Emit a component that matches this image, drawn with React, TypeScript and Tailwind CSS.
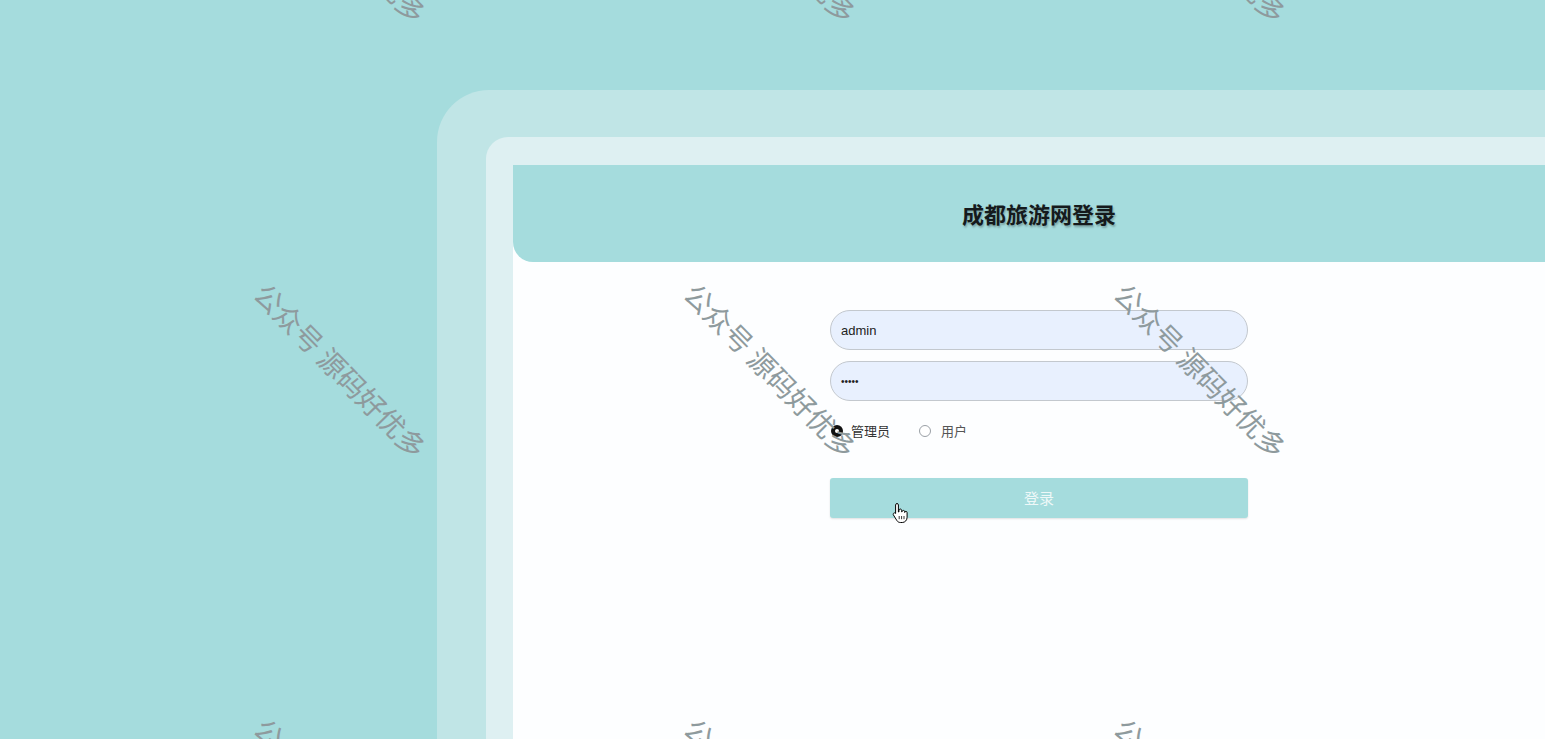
import React from "react";

const wmFont = { fontFamily: '"Noto Sans CJK SC", "Noto Sans", sans-serif' };

function Watermarks() {
  const xs = [341, 771, 1201];
  const ys = [-65, 370, 805];
  const items: { x: number; y: number }[] = [];
  ys.forEach((y) => xs.forEach((x) => items.push({ x, y })));
  return (
    <div className="pointer-events-none absolute inset-0 overflow-hidden">
      {items.map((p, i) => (
        <div
          key={i}
          className="absolute whitespace-nowrap text-[28px] leading-none text-[#8e9a9d]"
          style={{
            ...wmFont,
            left: p.x,
            top: p.y,
            transform: "translate(-50%, -50%) rotate(45.5deg)",
          }}
        >
          公众号 源码好优多
        </div>
      ))}
    </div>
  );
}

function Cursor() {
  return (
    <svg
      className="pointer-events-none absolute left-[892px] top-[502px]"
      width="16"
      height="22"
      viewBox="0 0 16 22"
    >
      <path
        d="M5 1.5c.8 0 1.4.6 1.4 1.4V10l.6-.2V8.3c0-.8.6-1.3 1.3-1.3s1.3.5 1.3 1.3v1.5l.5-.1c0-.8.6-1.3 1.3-1.3s1.3.6 1.3 1.3v.8c0-.7.6-1.2 1.2-1.200.7 0 1.2.6 1.2 1.3v4.6c0 2.9-2 5.300-4.8 5.300H8.4c-1.5 0-2.7-.7-3.5-1.9L1.4 12.9c-.4-.6-.2-1.4.4-1.8.6-.4 1.3-.2 1.7.3l.1.1V2.9c0-.8.6-1.4 1.4-1.4z"
        fill="#fff"
        stroke="#000"
        strokeWidth="1"
      />
      <path d="M7.2 14v3.2M9.6 14v3.2M12 14v3.2" stroke="#000" strokeWidth="0.8" />
    </svg>
  );
}

export default function App() {
  return (
    <div
      className="relative h-[739px] w-[1545px] overflow-hidden bg-[#a5dcdd]"
      style={{ fontFamily: '"Liberation Sans", "Noto Sans CJK SC", sans-serif' }}
    >
      <div className="flex h-full pl-[437px] pt-[90px]">
        <div className="flex h-[700px] w-[1200px] shrink-0 rounded-tl-[52px] bg-[#c0e5e6] pl-[49px] pt-[47px]">
          <div className="flex h-[700px] w-[1100px] shrink-0 rounded-tl-[22px] bg-[#def0f2] pl-[27px] pt-[28px]">
            <div className="flex h-[700px] w-[1052px] shrink-0 flex-col bg-[#fdfeff]">
              <div className="flex h-[97px] items-center justify-center rounded-bl-[20px] bg-[#a5dcdd]">
                <h1
                  className="text-[22px] font-bold text-[#151a1c] [text-shadow:1px_2px_2px_rgba(0,0,0,0.25)]"
                  style={{ fontFamily: '"Noto Sans CJK SC", sans-serif' }}
                >
                  成都旅游网登录
                </h1>
              </div>
              <div className="flex flex-col items-center pt-[48px]">
                <div className="flex w-[418px] flex-col">
                  <input
                    readOnly
                    value="admin"
                    className="h-[40px] w-full rounded-full border border-[#c3c8ce] bg-[#e8f0fe] px-[10px] text-[13px] text-[#222] outline-none"
                  />
                  <input
                    readOnly
                    type="password"
                    value="admin"
                    className="mt-[11px] h-[40px] w-full rounded-full border border-[#c3c8ce] bg-[#e8f0fe] px-[10px] text-[10px] text-[#222] outline-none"
                  />
                  <div className="mt-[23px] flex h-[14px] items-center text-[13px] text-[#333]">
                    <span className="ml-[1px] flex h-[12px] w-[12px] items-center justify-center rounded-full bg-[#111]">
                      <span className="h-[4px] w-[4px] rounded-full bg-white" />
                    </span>
                    <span className="ml-[8px]" style={{ fontFamily: '"Noto Sans CJK SC", sans-serif' }}>
                      管理员
                    </span>
                    <span className="ml-[29px] h-[12px] w-[12px] rounded-full border border-[#9aa0a6] bg-white" />
                    <span className="ml-[10px] text-[#555]" style={{ fontFamily: '"Noto Sans CJK SC", sans-serif' }}>
                      用户
                    </span>
                  </div>
                  <button
                    className="mt-[40px] h-[40px] w-full rounded-[3px] bg-[#a5dcdd] text-[15px] text-[#eef8f8] shadow-[0_1px_2px_rgba(0,0,0,0.12)]"
                    style={{ fontFamily: '"Noto Sans CJK SC", sans-serif' }}
                  >
                    登录
                  </button>
                </div>
              </div>
            </div>
          </div>
        </div>
      </div>
      <Watermarks />
      <Cursor />
    </div>
  );
}
